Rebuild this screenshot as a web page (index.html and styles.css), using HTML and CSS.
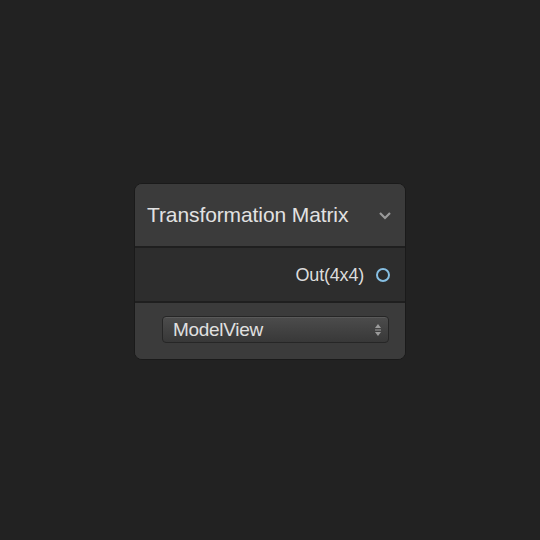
FILE: index.html
```html
<!DOCTYPE html>
<html>
<head>
<meta charset="utf-8">
<link rel="stylesheet" href="styles.css">
</head>
<body>
<div class="canvas">
  <div class="node">
    <div class="node-header">
      <span class="title">Transformation Matrix</span>
      <svg class="chevron" width="14" height="10" viewBox="0 0 14 10"><path d="M2 3 L7 8 L12 3" fill="none" stroke="#9a9a9a" stroke-width="2.2"/></svg>
    </div>
    <div class="node-row">
      <span class="port-label">Out(4x4)</span>
      <span class="port"></span>
    </div>
    <div class="node-footer">
      <div class="select">
        <span class="select-text">ModelView</span>
        <svg class="arrows" width="8" height="14" viewBox="0 0 8 14"><path d="M4 1 L7 5 L1 5 Z" fill="#9c9c9c"/><rect x="1" y="6.5" width="6" height="1" fill="#9c9c9c"/><path d="M1 9 L7 9 L4 13 Z" fill="#9c9c9c"/></svg>
      </div>
    </div>
  </div>
</div>
</body>
</html>
```
FILE: styles.css
```css
html, body {
  margin: 0;
  padding: 0;
  background: #222222;
  width: 540px;
  height: 540px;
  overflow: hidden;
}
.canvas {
  width: 540px;
  height: 540px;
  display: flex;
  padding-top: 183px;
  padding-left: 134px;
  box-sizing: border-box;
  font-family: "Liberation Sans", Arial, sans-serif;
}
.node {
  width: 272px;
  height: 177px;
  box-sizing: border-box;
  border: 1px solid #1a1a1a;
  border-radius: 8px;
  overflow: hidden;
  display: flex;
  flex-direction: column;
  background: #3a3a3a;
}
.node-header {
  height: 64px;
  background: #3b3b3b;
  border-bottom: 2px solid #1f1f1f;
  display: flex;
  align-items: center;
  padding: 0 13px 0 12px;
  box-sizing: border-box;
  flex-shrink: 0;
}
.title {
  flex: 1;
  color: #e2e2e2;
  font-size: 21px;
  letter-spacing: -0.1px;
}
.chevron {
  display: block;
}
.node-row {
  height: 55px;
  background: #2d2d2d;
  border-bottom: 2px solid #1f1f1f;
  display: flex;
  align-items: center;
  justify-content: flex-end;
  padding-right: 15px;
  box-sizing: border-box;
  flex-shrink: 0;
}
.port-label {
  color: #dcdcdc;
  font-size: 18px;
  letter-spacing: -0.2px;
  margin-right: 12px;
  padding-top: 1px;
}
.port {
  width: 14px;
  height: 14px;
  box-sizing: border-box;
  border: 2px solid #86bfe3;
  border-radius: 50%;
  background: #2a2a2a;
  margin-top: 1px;
}
.node-footer {
  flex: 1;
  background: #3b3b3b;
  display: flex;
  align-items: flex-start;
  padding: 13px 16px 0 27px;
}
.select {
  flex: 1;
  height: 27px;
  box-sizing: border-box;
  border: 1px solid #262626;
  border-radius: 4px;
  background: linear-gradient(#4c4c4c, #383838);
  box-shadow: inset 0 1px 0 rgba(255,255,255,0.08);
  display: flex;
  align-items: center;
  padding: 0 6px 0 10px;
}
.select-text {
  flex: 1;
  color: #e0e0e0;
  font-size: 19px;
  letter-spacing: -0.3px;
}
.arrows {
  display: block;
}
```
